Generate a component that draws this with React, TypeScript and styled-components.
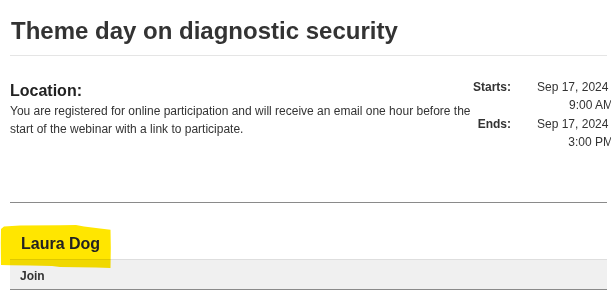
import React from 'react'
import styled, { createGlobalStyle } from 'styled-components'

const GlobalStyle = createGlobalStyle`
  html, body {
    margin: 0;
    padding: 0;
    background: #fff;
    overflow: hidden;
  }
  body {
    font-family: 'Liberation Sans', Arial, sans-serif;
    color: #333;
  }
`

const Frame = styled.div`
  box-sizing: border-box;
  width: 611px;
  padding-left: 10px;
  overflow: hidden;
`

const Main = styled.div`
  width: 597px;
`

const Title = styled.h1`
  margin: 0;
  padding: 17px 0 11px 1px;
  font-size: 24px;
  line-height: 27px;
  font-weight: 700;
  color: #333;
  border-bottom: 1px solid #e5e5e5;
`

const InfoRow = styled.div`
  display: flex;
  align-items: flex-start;
  padding-top: 22px;
  margin-bottom: 51px;
`

const LocationColumn = styled.div`
  width: 462px;
  flex-shrink: 0;
  padding-top: 3.5px;
`

const SectionHeading = styled.h2<{ $indent?: number }>`
  position: relative;
  margin: 0;
  padding-left: ${(p) => p.$indent ?? 0}px;
  font-size: 16px;
  line-height: ${(p) => (p.$indent ? 20 : 18)}px;
  font-weight: 700;
  color: #222;
`

const Text = styled.p`
  margin: 2px 0 0;
  font-size: 12px;
  line-height: 18px;
  color: #333;
`

const Dates = styled.dl`
  margin: 0;
  flex-shrink: 0;
  display: grid;
  grid-template-columns: 39px 76px;
  column-gap: 26px;
  font-size: 12px;
  line-height: 18.3px;
  color: #333;
`

const DateLabel = styled.dt`
  grid-column: 1;
  text-align: right;
  font-weight: 700;
`

const DateValue = styled.dd`
  grid-column: 2;
  margin: 0;
  display: flex;
  flex-direction: column;
`

const Day = styled.span`
  text-align: left;
  white-space: nowrap;
`

const Time = styled.span`
  text-align: right;
  white-space: nowrap;
`

const Divider = styled.hr`
  margin: 0;
  border: 0;
  border-top: 1px solid #8a8a8a;
`

const Attendee = styled.section`
  position: relative;
  padding-top: 31px;
`

const Highlight = styled.svg`
  position: absolute;
  left: -10px;
  top: 0;
  pointer-events: none;
  mix-blend-mode: multiply;
`

const Table = styled.table`
  width: 100%;
  margin-top: 5px;
  border-collapse: collapse;
`

const HeaderCell = styled.th`
  padding: 9px 10px 6px;
  text-align: left;
  font-size: 12px;
  line-height: 14px;
  font-weight: 700;
  color: #333;
  background: #f0f0f0;
  border-top: 1px solid #dedede;
  border-bottom: 1px solid #8a8a8a;
`

const schedule = [
  { label: 'Starts:', day: 'Sep 17, 2024', time: '9:00 AM' },
  { label: 'Ends:', day: 'Sep 17, 2024', time: '3:00 PM' },
]

export default function App() {
  return (
    <>
      <GlobalStyle />
      <Frame>
        <Main>
          <Title>Theme day on diagnostic security</Title>
          <InfoRow>
            <LocationColumn>
              <SectionHeading>Location:</SectionHeading>
              <Text>
                You are registered for online participation and will receive an email one hour before the start of the
                webinar with a link to participate.
              </Text>
            </LocationColumn>
            <Dates>
              {schedule.map((s) => (
                <React.Fragment key={s.label}>
                  <DateLabel>{s.label}</DateLabel>
                  <DateValue>
                    <Day>{s.day}</Day>
                    <Time>{s.time}</Time>
                  </DateValue>
                </React.Fragment>
              ))}
            </Dates>
          </InfoRow>
          <Divider />
          <Attendee>
            {/* marker stroke drawn over the name, as in the screenshot */}
            <Highlight width='120' height='70' viewBox='0 0 120 70'>
              <path
                d='M1 26 L4 23.5 L20 22.6 L60 22.2 L76 22 L84 23.6 L100 25.4 L110.5 26.8 L110.8 45 L110.5 65 L96 64.6 L60 64 L52 63 L30 62.6 L10 62.2 L1 62 L0.8 40 Z'
                fill='#ffe600'
              />
            </Highlight>
            <SectionHeading $indent={11}>Laura Dog</SectionHeading>
            <Table>
              <thead>
                <tr>
                  <HeaderCell>Join</HeaderCell>
                </tr>
              </thead>
            </Table>
          </Attendee>
        </Main>
      </Frame>
    </>
  )
}
